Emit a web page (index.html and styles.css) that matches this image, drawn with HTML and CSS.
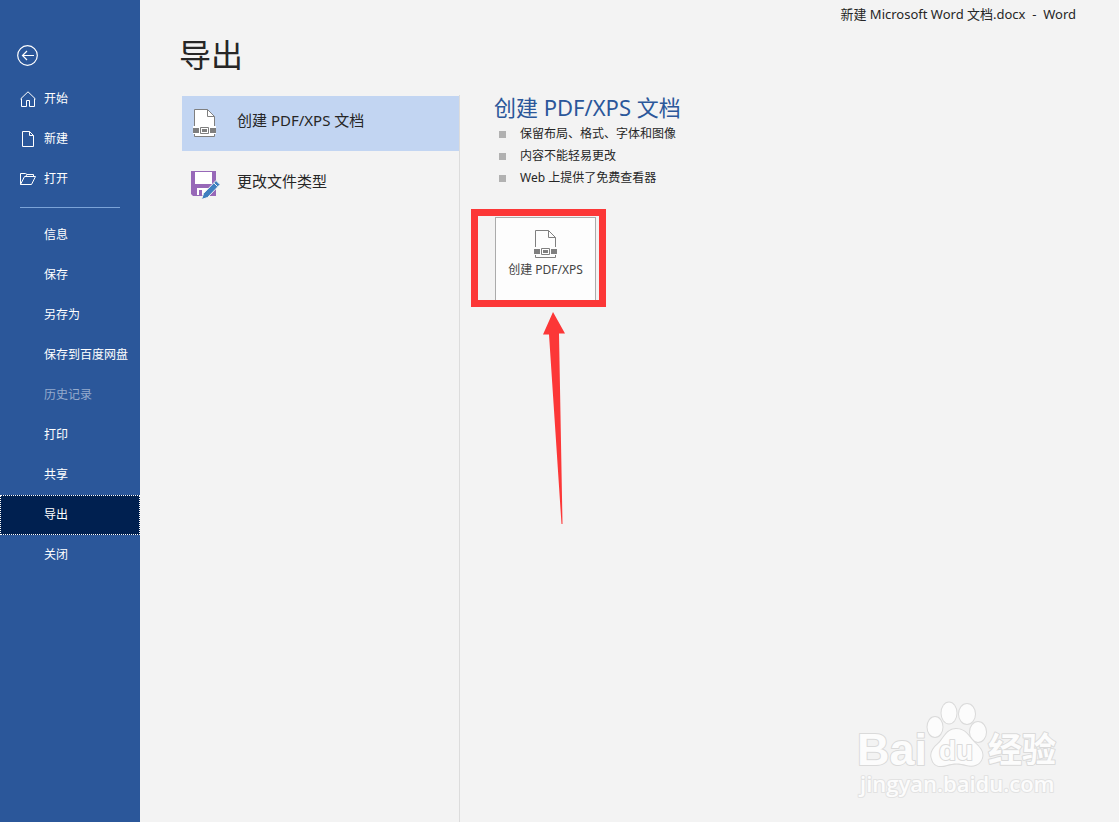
FILE: index.html
```html
<!DOCTYPE html>
<html lang="zh-CN">
<head>
  <meta charset="UTF-8">
  <title>导出 - Word</title>
  <link rel="stylesheet" href="styles.css">
</head>
<body>
  <div class="backstage">
    <nav class="sidebar">
      <button class="back-button" aria-label="返回">
        <svg width="22" height="22" viewBox="0 0 22 22" fill="none" stroke="currentColor" stroke-width="1.2">
          <circle cx="10.500" cy="10.500" r="9.800"/>
          <path d="M17 10.500H5.500M10 6L5.500 10.500L10 15"/>
        </svg>
      </button>
      <a class="nav-item" href="#">
        <svg class="nav-icon" viewBox="0 0 16 16"><path d="M.5 8L8 .8L15.500 8M1.500 7.500V15.500H6.500V9.500H9.500V15.500H14.500V7.500"/></svg>
        开始
      </a>
      <a class="nav-item" href="#">
        <svg class="nav-icon" viewBox="0 0 16 16"><path d="M2.500 .5H9.500L13.500 4.500V15.500H2.500ZM9.500 .5V4.500H13.500"/></svg>
        新建
      </a>
      <a class="nav-item" href="#">
        <svg class="nav-icon" viewBox="0 0 16 16"><path d="M.5 13.500V2.500H5.500L7 3.500H13.500V5.500M.5 13.500L4.500 5.500H15.500L11.500 13.500ZM7 3.500L5.500 5.500"/></svg>
        打开
      </a>
      <hr class="nav-divider">
      <a class="nav-item" href="#">信息</a>
      <a class="nav-item" href="#">保存</a>
      <a class="nav-item" href="#">另存为</a>
      <a class="nav-item" href="#">保存到百度网盘</a>
      <a class="nav-item disabled" aria-disabled="true">历史记录</a>
      <a class="nav-item" href="#">打印</a>
      <a class="nav-item" href="#">共享</a>
      <a class="nav-item active" href="#">导出</a>
      <a class="nav-item" href="#">关闭</a>
    </nav>

    <main class="main">
      <div class="title-bar">新建 Microsoft Word 文档.docx&nbsp; -&nbsp; Word</div>
      <h1 class="page-title">导出</h1>

      <div class="columns">
        <div class="option-list">
          <button class="option selected">
            <svg class="option-icon" viewBox="0 0 30 30">
              <path d="M4.500 1.500H17.500L24.500 8.500V28.500H4.500Z" fill="#fff" stroke="#7f7f7f"/>
              <path d="M17.500 1.500V8.500H24.500" fill="none" stroke="#7f7f7f"/>
              <path d="M3 18H26V26H3Z" fill="#fff"/>
              <path d="M3 20H9V25H3ZM20 20H26V25H20ZM12 21H17V24H12Z" fill="#7f7f7f"/>
              <path d="M10.500 19.500H18.500V25.500H10.500Z" fill="none" stroke="#7f7f7f"/>
            </svg>
            创建 PDF/XPS 文档
          </button>
          <button class="option">
            <svg class="option-icon" viewBox="0 0 30 30">
              <path d="M1 2H26V27H3L1 25Z" fill="#9768b8"/>
              <path d="M5 3H22V15H5Z" fill="#fff"/>
              <path d="M7 19H19V26H7Z" fill="#fff"/>
              <path d="M9 21H12V26H9Z" fill="#9768b8"/>
              <path d="M11.500 30.500L13.500 24.500L26 11.500L30 15.500L17.500 28.500Z" fill="#3f7fbf" stroke="#f3f3f3"/>
              <path d="M24 14L27.500 17.500" stroke="#f3f3f3"/>
            </svg>
            更改文件类型
          </button>
        </div>

        <section class="details">
          <h2 class="details-title">创建 PDF/XPS 文档</h2>
          <ul class="feature-list">
            <li>保留布局、格式、字体和图像</li>
            <li>内容不能轻易更改</li>
            <li>Web 上提供了免费查看器</li>
          </ul>
          <div class="create">
            <button class="create-button">
              <svg width="30" height="30" viewBox="0 0 30 30">
                <path d="M4.500 18V1.500H17.500L24.500 8.500V18M17.500 1.500V8.500H24.500M4.500 26V28.500H24.500V26" fill="none" stroke="#7f7f7f"/>
                <path d="M3 20H9V25H3ZM20 20H26V25H20ZM12 21H17V24H12Z" fill="#7f7f7f"/>
                <path d="M10.500 19.500H18.500V25.500H10.500Z" fill="none" stroke="#7f7f7f"/>
              </svg>
              创建 PDF/XPS
            </button>
            <div class="highlight"></div>
            <svg class="arrow" width="24" height="212" viewBox="0 0 24 212">
              <path d="M11 0L23 21.500H17L20.500 212H19.500L7 22.500H1Z" fill="#fc3737"/>
            </svg>
          </div>
        </section>
      </div>
    </main>

    <svg class="watermark" width="212" height="108" viewBox="0 0 212 108">
      <g class="watermark-shape">
        <text class="watermark-brand" x="2" y="70">Bai</text>
        <ellipse cx="80" cy="32" rx="7.500" ry="10"/>
        <ellipse cx="94" cy="18" rx="7.500" ry="10.500"/>
        <ellipse cx="112" cy="19" rx="8" ry="10"/>
        <ellipse cx="123" cy="37" rx="8" ry="10"/>
        <path d="M101 34C91 34 89 44 83 49C77 54 75 59 77 64C79 72 86 72 92 70C98 68 105 68 111 70C118 72 125 70 127 63C129 56 124 52 119 47C113 41 111 34 101 34Z"/>
        <text class="watermark-du" x="84" y="65">du</text>
        <text class="watermark-cjk" x="133" y="67">经验</text>
        <text class="watermark-url" x="5" y="97">jingyan.baidu.com</text>
      </g>
    </svg>
  </div>
</body>
</html>
```
FILE: styles.css
```css
* {
  box-sizing: border-box;
}

body {
  margin: 0;
  background-color: #f3f3f3;
  color: #262626;
  font-family: "Noto Sans", "Noto Sans CJK SC", sans-serif;
  font-size: 12px;
}

button {
  font-family: inherit;
  color: inherit;
}

.backstage {
  position: relative;
  display: flex;
  min-height: 100vh;
}

/* sidebar */

.sidebar {
  display: flex;
  flex-direction: column;
  flex: 0 0 140px;
  background-color: #2b579a;
  color: #fff;
}

.back-button {
  display: flex;
  align-self: flex-start;
  margin: 45px 0 12px 17px;
  padding: 0;
  border: none;
  background: none;
  cursor: pointer;
}

.nav-item {
  display: flex;
  align-items: center;
  gap: 8px;
  height: 40px;
  padding: 0 0 2px 43px;
  border: 1px solid transparent;
  color: #fff;
  text-decoration: none;
  white-space: nowrap;
}

.nav-item:has(.nav-icon) {
  padding-left: 19px;
}

.nav-icon {
  width: 16px;
  height: 16px;
  margin-top: 2px;
  fill: none;
  stroke: currentColor;
}

.nav-item.active {
  background-color: #002050;
  border: 1px dotted #fff;
}

.nav-item.disabled {
  color: #95abcd;
}

.nav-divider {
  width: 100px;
  height: 1px;
  margin: 8px 20px 7px;
  border: none;
  background-color: #7ba3d8;
}

/* main area */

.main {
  display: flex;
  flex-direction: column;
  flex: 1;
}

.title-bar {
  padding: 0 43px 2px 0;
  font-size: 13px;
  line-height: 28px;
  text-align: right;
}

.page-title {
  margin: 0 0 15px 39px;
  font-size: 32px;
  font-weight: 400;
  line-height: 50px;
}

.columns {
  display: flex;
  flex: 1;
}

.option-list {
  width: 320px;
  padding: 1px 0 0 42px;
  border-right: 1px solid #dcdcdc;
}

.option {
  display: flex;
  align-items: center;
  gap: 17px;
  width: 100%;
  height: 55px;
  margin-bottom: 6px;
  padding: 0 8px 8px;
  border: none;
  background: none;
  font-size: 15px;
  text-align: left;
  cursor: pointer;
}

.option.selected {
  background-color: #c2d5f2;
}

.option-icon {
  width: 30px;
  height: 30px;
  margin-top: 6px;
}

.details {
  flex: 1;
  padding-left: 34px;
}

.details-title {
  margin: 0 0 4px;
  color: #2b579a;
  font-size: 22px;
  font-weight: 400;
  line-height: 24px;
}

.feature-list {
  margin: 0 0 28px;
  padding: 0 0 0 5px;
  list-style: none;
}

.feature-list li {
  display: flex;
  align-items: center;
  gap: 14px;
  line-height: 22px;
}

.feature-list li::before {
  content: "";
  width: 7px;
  height: 7px;
  background-color: #b1b1b1;
}

.create {
  position: relative;
  width: 101px;
  margin-left: 1px;
}

.create-button {
  display: flex;
  flex-direction: column;
  align-items: center;
  width: 100%;
  height: 86px;
  padding: 11px 0 0;
  border: 1px solid #ababab;
  background-color: #fdfdfd;
  color: #444;
  font-size: 12px;
  line-height: 22px;
  white-space: nowrap;
  cursor: pointer;
}

/* callout drawn over the button */

.highlight {
  position: absolute;
  top: -8px;
  left: -24px;
  width: 135px;
  height: 98px;
  border: 7px solid #fc3737;
}

.arrow {
  position: absolute;
  top: 95px;
  left: 47px;
}

.watermark {
  position: absolute;
  right: 52px;
  bottom: 19px;
}

.watermark-shape {
  fill: #fcfcfc;
  stroke: #dadada;
  stroke-width: 2px;
  stroke-linejoin: round;
  paint-order: stroke;
}

.watermark-brand {
  font-family: "Liberation Sans", sans-serif;
  font-size: 45px;
  font-weight: 700;
}

.watermark-du {
  font-family: "Liberation Sans", sans-serif;
  font-size: 28px;
  font-weight: 700;
}

.watermark-cjk {
  font-family: "Noto Sans CJK SC", sans-serif;
  font-size: 34px;
  font-weight: 700;
}

.watermark-url {
  font-family: "Open Sans", sans-serif;
  font-size: 22px;
  font-weight: 600;
  stroke: #e2e2e2;
}
```
